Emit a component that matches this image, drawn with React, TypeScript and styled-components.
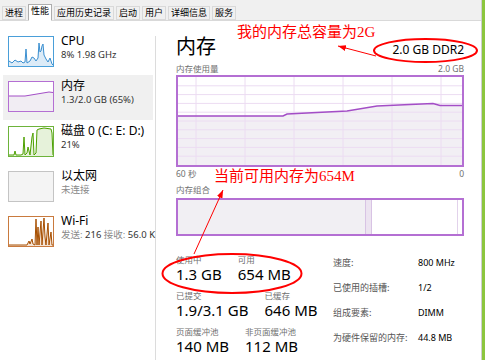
import styled, { createGlobalStyle } from 'styled-components'

const GlobalStyle = createGlobalStyle`
  html, body {
    margin: 0;
    padding: 0;
    background: #fff;
  }
  body {
    font-family: "Noto Sans", "Noto Sans CJK SC", sans-serif;
  }
`

const Window = styled.div`
  position: relative;
  width: 485px;
  height: 360px;
  box-sizing: border-box;
  border-right: 3px solid #8cc63e;
  overflow: hidden;
  background: #fff;
`

const Frame = styled.div`
  height: 100%;
  display: flex;
  flex-direction: column;
  border-right: 1px solid #cfcfcf;
`

const TabBar = styled.div`
  flex: none;
  height: 20px;
  display: flex;
  align-items: flex-end;
  gap: 2px;
  padding-left: 2px;
  background: #f0f0f0;
  border-bottom: 1px solid #d9d9d9;
`

const Tab = styled.div<{ $active?: boolean }>`
  box-sizing: border-box;
  height: ${({ $active }) => ($active ? '17px' : '14px')};
  margin-bottom: ${({ $active }) => ($active ? '-1px' : '0')};
  padding: 0 2px;
  border: 1px solid ${({ $active }) => ($active ? '#adadad' : '#d9d9d9')};
  border-bottom-color: ${({ $active }) => ($active ? '#fff' : '#d9d9d9')};
  background: ${({ $active }) => ($active ? '#fff' : '#f0f0f0')};
  font-family: "Noto Sans CJK SC", sans-serif;
  font-size: 9px;
  line-height: 12px;
  color: #000;
  white-space: nowrap;
`

const Body = styled.div`
  flex: 1;
  min-height: 0;
  display: flex;
`

const Sidebar = styled.div`
  flex: none;
  width: 156px;
  box-sizing: border-box;
  padding-top: 9px;
  overflow: hidden;
  background: linear-gradient(#dcdcdc, #dcdcdc) right 15px / 1px calc(100% - 15px) no-repeat;
`

const Item = styled.div<{ $active?: boolean }>`
  height: 45px;
  box-sizing: border-box;
  margin: 0 3px;
  padding: 6px 5px;
  display: flex;
  gap: 7px;
  background: ${({ $active }) => ($active ? '#f0f0f0' : 'transparent')};
`

const Thumb = styled.div<{ $color: string; $bg?: string }>`
  flex: none;
  width: 46px;
  height: 31px;
  box-sizing: border-box;
  border: 1px solid ${({ $color }) => $color};
  background: ${({ $bg }) => $bg || '#fff'};
  svg {
    display: block;
  }
`

const Info = styled.div`
  flex: none;
  margin-top: -3px;
`

const Name = styled.div`
  font-size: 12px;
  line-height: 15px;
  color: #000;
  white-space: nowrap;
`

const Detail = styled.div<{ $muted?: boolean }>`
  font-size: 9.5px;
  line-height: 13px;
  color: ${({ $muted }) => ($muted ? '#8a8a8a' : '#333')};
  white-space: nowrap;
`

const Muted = styled.span`
  color: #8a8a8a;
`

const Content = styled.div`
  flex: 1;
  min-width: 0;
  padding: 13px 17px 0 20px;
  display: flex;
  flex-direction: column;
`

const Header = styled.div`
  height: 24px;
  display: flex;
  justify-content: space-between;
  align-items: baseline;
`

const PageTitle = styled.div`
  font-family: "Noto Sans CJK SC", sans-serif;
  font-size: 20px;
  line-height: 24px;
  color: #000;
`

const Spec = styled.div`
  font-size: 12px;
  color: #000;
`

const SmallRow = styled.div<{ $gap?: number }>`
  margin-top: ${({ $gap }) => $gap ?? 5}px;
  display: flex;
  justify-content: space-between;
  font-size: 8.5px;
  line-height: 11px;
  color: #707070;
`

const Chart = styled.div`
  margin-top: 1px;
  height: 92px;
  box-sizing: border-box;
  border: 2px solid #b46fd3;
  svg {
    display: block;
  }
`

const Composition = styled.div`
  margin-top: 3px;
  height: 38px;
  box-sizing: border-box;
  border: 2px solid #b46fd3;
  display: flex;
`

const Segment = styled.div<{ $width?: number; $bg: string; $edge?: string }>`
  ${({ $width }) => ($width ? `width: ${$width}px; flex: none;` : 'flex: 1;')}
  background: ${({ $bg }) => $bg};
  border-right: 1px solid ${({ $edge }) => $edge || 'transparent'};
`

const Stats = styled.div`
  margin-top: 18px;
  display: flex;
`

const StatsLeft = styled.div`
  flex: none;
  width: 157px;
  display: flex;
  flex-direction: column;
  gap: 6px;
`

const StatRow = styled.div`
  display: flex;
  gap: 16px;
`

const StatLabel = styled.div`
  font-family: "Noto Sans CJK SC", sans-serif;
  font-size: 8.5px;
  line-height: 11px;
  color: #707070;
`

const StatValue = styled.div`
  font-size: 15px;
  line-height: 19px;
  color: #000;
  white-space: nowrap;
`

const Details = styled.div`
  margin-top: 2px;
  display: grid;
  grid-template-columns: 85px auto;
  font-size: 9px;
  line-height: 13px;
  white-space: nowrap;
`

const DetailKey = styled.div`
  font-family: "Noto Sans CJK SC", sans-serif;
  color: #555;
`

const DetailValue = styled.div`
  color: #000;
`

const Overlay = styled.svg`
  position: absolute;
  left: 0;
  top: 0;
  pointer-events: none;
`

const RedNote = styled.div<{ $x: number; $y: number }>`
  position: absolute;
  left: ${({ $x }) => $x}px;
  top: ${({ $y }) => $y}px;
  font-family: "Liberation Serif", "Noto Sans CJK SC", serif;
  font-size: 15px;
  line-height: 16px;
  color: #ff0000;
  white-space: nowrap;
`

const tabs = ['进程', '性能', '应用历史记录', '启动', '用户', '详细信息', '服务']

const Spark = ({ points, line, fill }: { points: string; line: string; fill: string }) => (
  <svg width="44" height="29" viewBox="0 0 44 29">
    <polygon points={`0,29 ${points} 44,29`} fill={fill} />
    <polyline points={points} fill="none" stroke={line} strokeWidth="1" />
  </svg>
)

const usage = '0,39 105,39 109,37 169,34 199,29 232,27.5 255,26.5 262,28.5 284,28.5'

export default function App() {
  return (
    <Window>
      <GlobalStyle />
      <Frame>
        <TabBar>
          {tabs.map((t) => (
            <Tab key={t} $active={t === '性能'}>{t}</Tab>
          ))}
        </TabBar>
        <Body>
          <Sidebar>
            <Item>
              <Thumb $color="#4a9fd9">
                <Spark
                  line="#3a8fd0"
                  fill="#dcebf7"
                  points="0,24 3,26 6,23 9,25 12,24 14,26 16,25 17,12 18,26 21,24 23,20 25,21 27,24 29,21 30,6 31,15 32,14 33,9 34,7 35,18 37,22 39,25 41,21 43,27 44,28"
                />
              </Thumb>
              <Info>
                <Name>CPU</Name>
                <Detail>8% 1.98 GHz</Detail>
              </Info>
            </Item>
            <Item $active>
              <Thumb $color="#b46fd3">
                <Spark
                  line="#a34ec6"
                  fill="#f1edf3"
                  points="0,14 16,14 22,13 28,12 34,11 40,10 44,10.5"
                />
              </Thumb>
              <Info>
                <Name>内存</Name>
                <Detail>1.3/2.0 GB (65%)</Detail>
              </Info>
            </Item>
            <Item>
              <Thumb $color="#6db33a">
                <Spark
                  line="#4da000"
                  fill="#e6f2da"
                  points="0,28 5,28 6,24 7,28 12,28 14,27 15,10 16,28 18,26 19,20 21,28 23,10 24,6 25,28 27,26 28,3 30,2 35,1 42,2 43,6 44,28"
                />
              </Thumb>
              <Info>
                <Name>磁盘 0 (C: E: D:)</Name>
                <Detail>21%</Detail>
              </Info>
            </Item>
            <Item>
              <Thumb $color="#c4c4c4" $bg="#f4f4f4" />
              <Info>
                <Name>以太网</Name>
                <Detail $muted>未连接</Detail>
              </Info>
            </Item>
            <Item>
              <Thumb $color="#c97a3e">
                <Spark
                  line="#a74f01"
                  fill="#f5e3d4"
                  points="0,28 18,28 20,24 21,27 23,22 24,27 26,28 27,2 28,28 29,10 30,28 32,4 33,28 35,1 36,20 37,28 39,6 40,28 42,15 43,28 44,28"
                />
              </Thumb>
              <Info>
                <Name>Wi-Fi</Name>
                <Detail>
                  <Muted>发送:</Muted> 216 <Muted>接收:</Muted> 56.0 K
                </Detail>
              </Info>
            </Item>
          </Sidebar>

          <Content>
            <Header>
              <PageTitle>内存</PageTitle>
              <Spec>2.0 GB DDR2</Spec>
            </Header>
            <SmallRow>
              <span>内存使用量</span>
              <span>2.0 GB</span>
            </SmallRow>
            <Chart>
              <svg width="284" height="88" viewBox="0 0 284 88">
                <polygon points={`${usage} 284,88 0,88`} fill="#f2eff4" />
                {[8.8, 17.6, 26.4, 35.2, 44, 52.8, 61.6, 70.4, 79.2].map((y) => (
                  <line key={y} x1="0" x2="284" y1={y} y2={y} stroke="#ecdcf2" strokeWidth="1" />
                ))}
                {[18, 67, 116, 165, 214, 263].map((x) => (
                  <line key={x} x1={x} x2={x} y1="0" y2="88" stroke="#ecdcf2" strokeWidth="1" />
                ))}
                <polyline points={usage} fill="none" stroke="#a34ec6" strokeWidth="1.5" />
              </svg>
            </Chart>
            <SmallRow $gap={1}>
              <span>60 秒</span>
              <span>0</span>
            </SmallRow>
            <SmallRow>
              <span>内存组合</span>
            </SmallRow>
            <Composition>
              <Segment $width={187} $bg="#f1eff3" $edge="#d8c3e4" />
              <Segment $width={5} $bg="#ece3f0" $edge="#d8c3e4" />
              <Segment $bg="#fff" $edge="#e2d2eb" />
              <Segment $width={3} $bg="#fff" />
            </Composition>
            <Stats>
              <StatsLeft>
                <StatRow>
                  <div>
                    <StatLabel>使用中</StatLabel>
                    <StatValue>1.3 GB</StatValue>
                  </div>
                  <div>
                    <StatLabel>可用</StatLabel>
                    <StatValue>654 MB</StatValue>
                  </div>
                </StatRow>
                <StatRow>
                  <div>
                    <StatLabel>已提交</StatLabel>
                    <StatValue>1.9/3.1 GB</StatValue>
                  </div>
                  <div>
                    <StatLabel>已缓存</StatLabel>
                    <StatValue>646 MB</StatValue>
                  </div>
                </StatRow>
                <StatRow>
                  <div>
                    <StatLabel>页面缓冲池</StatLabel>
                    <StatValue>140 MB</StatValue>
                  </div>
                  <div>
                    <StatLabel>非页面缓冲池</StatLabel>
                    <StatValue>112 MB</StatValue>
                  </div>
                </StatRow>
              </StatsLeft>
              <Details>
                <DetailKey>速度:</DetailKey>
                <DetailValue>800 MHz</DetailValue>
                <DetailKey>已使用的插槽:</DetailKey>
                <DetailValue>1/2</DetailValue>
                <DetailKey>组成要素:</DetailKey>
                <DetailValue>DIMM</DetailValue>
                <DetailKey>为硬件保留的内存:</DetailKey>
                <DetailValue>44.8 MB</DetailValue>
              </Details>
            </Stats>
          </Content>
        </Body>
      </Frame>

      <RedNote $x={237} $y={24}>我的内存总容量为2G</RedNote>
      <RedNote $x={214} $y={168}>当前可用内存为654M</RedNote>
      <Overlay width="485" height="360" viewBox="0 0 485 360">
        <defs>
          <marker id="head" markerUnits="userSpaceOnUse" markerWidth="8" markerHeight="6" refX="8" refY="3" orient="auto">
            <path d="M0,0 L8,3 L0,6 z" fill="#ff0000" />
          </marker>
        </defs>
        <ellipse cx="425.5" cy="50.5" rx="51.5" ry="11.5" fill="none" stroke="#ff0000" strokeWidth="2" />
        <line x1="376" y1="56" x2="338" y2="46" stroke="#ff0000" strokeWidth="1" markerEnd="url(#head)" />
        <ellipse cx="232" cy="273.5" rx="69.5" ry="19.5" fill="none" stroke="#ff0000" strokeWidth="2" />
        <line x1="194" y1="254" x2="223" y2="190" stroke="#ff0000" strokeWidth="1" markerEnd="url(#head)" />
      </Overlay>
    </Window>
  )
}
